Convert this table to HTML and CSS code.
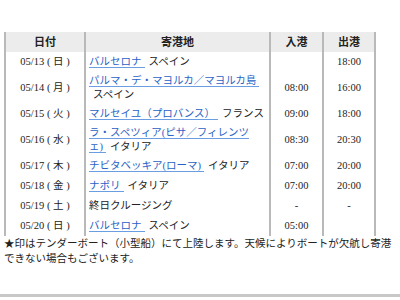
FILE: index.html
```html
<!DOCTYPE html>
<html>
<head>
<meta charset="utf-8">
<link rel="stylesheet" href="styles.css">
</head>
<body>
<div class="page">
  <table class="sched">
    <thead>
      <tr>
        <th class="c-date">日付</th>
        <th class="c-port">寄港地</th>
        <th class="c-in">入港</th>
        <th class="c-out">出港</th>
      </tr>
    </thead>
    <tbody>
      <tr>
        <td class="date">05/13 ( 日 )</td>
        <td class="port"><a href="#">バルセロナ</a><span class="country">スペイン</span></td>
        <td class="time"></td>
        <td class="time">18:00</td>
      </tr>
      <tr>
        <td class="date">05/14 ( 月 )</td>
        <td class="port"><a href="#">パルマ・デ・マヨルカ／マヨルカ島</a><span class="country">スペイン</span></td>
        <td class="time">08:00</td>
        <td class="time">16:00</td>
      </tr>
      <tr>
        <td class="date">05/15 ( 火 )</td>
        <td class="port"><a href="#">マルセイユ（プロバンス）</a><span class="country">フランス</span></td>
        <td class="time">09:00</td>
        <td class="time">18:00</td>
      </tr>
      <tr>
        <td class="date">05/16 ( 水 )</td>
        <td class="port"><a href="#">ラ・スペツィア(ピサ／フィレンツェ)</a><span class="country">イタリア</span></td>
        <td class="time">08:30</td>
        <td class="time">20:30</td>
      </tr>
      <tr>
        <td class="date">05/17 ( 木 )</td>
        <td class="port"><a href="#">チビタベッキア(ローマ)</a><span class="country">イタリア</span></td>
        <td class="time">07:00</td>
        <td class="time">20:00</td>
      </tr>
      <tr>
        <td class="date">05/18 ( 金 )</td>
        <td class="port"><a href="#">ナポリ</a><span class="country">イタリア</span></td>
        <td class="time">07:00</td>
        <td class="time">20:00</td>
      </tr>
      <tr>
        <td class="date">05/19 ( 土 )</td>
        <td class="port">終日クルージング</td>
        <td class="time">-</td>
        <td class="time">-</td>
      </tr>
      <tr>
        <td class="date">05/20 ( 日 )</td>
        <td class="port"><a href="#">バルセロナ</a><span class="country">スペイン</span></td>
        <td class="time">05:00</td>
        <td class="time"></td>
      </tr>
    </tbody>
  </table>
  <p class="note">★印はテンダーボート（小型船）にて上陸します。天候によりボートが欠航し寄港できない場合もございます。</p>
  <div class="rule"></div>
</div>
</body>
</html>
```

FILE: styles.css
```css
html, body {
  margin: 0;
  padding: 0;
  background: #ffffff;
}

body {
  font-family: "Liberation Serif", "Noto Sans CJK JP", serif;
  font-size: 10.5px;
  color: #222222;
}

.page {
  padding: 32px 4px 0 4px;
  width: 392px;
}

.sched {
  border-collapse: separate;
  border-spacing: 0;
  table-layout: fixed;
  width: 372px;
}

.sched th,
.sched td {
  box-sizing: border-box;
  border-left: 2px solid #b9b9b9;
  padding: 2px 3px;
  line-height: 14px;
  height: 20px;
  vertical-align: middle;
  line-break: loose;
}

.sched th:last-child,
.sched td:last-child {
  border-right: 2px solid #b9b9b9;
}

.sched th {
  background: #ececec;
  font-weight: bold;
  font-size: 11px;
  text-align: center;
  color: #222222;
}

.c-date { width: 80px; }
.c-port { width: 185px; }
.c-in { width: 53px; }
.c-out { width: 54px; }

.date {
  text-align: center;
  white-space: nowrap;
}

.sched td.port {
  text-align: left;
  padding-right: 4px;
}

.time {
  text-align: center;
}

.port a {
  color: #2a62c6;
  text-decoration: none;
  border-bottom: 1px solid #6b9de2;
  padding-right: 3px;
}

.country {
  margin-left: 4px;
}

.note {
  margin: 0;
  line-height: 15px;
  font-size: 10.5px;
}

.rule {
  margin-top: 28px;
  margin-left: -4px;
  margin-right: -4px;
  height: 3px;
  background: #c8c8c8;
}
```
